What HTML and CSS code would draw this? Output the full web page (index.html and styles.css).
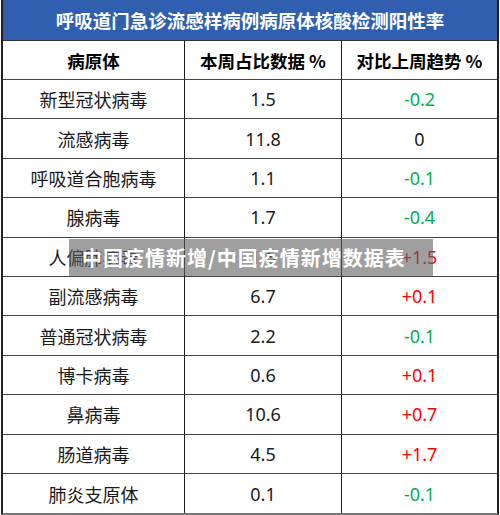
FILE: index.html
```html
<!DOCTYPE html>
<html lang="zh">
<head>
<meta charset="utf-8">
<link rel="stylesheet" href="styles.css">
</head>
<body>
<div class="sheet">
  <div class="title">呼吸道门急诊流感样病例病原体核酸检测阳性率</div>
  <div class="grid">
    <div class="cell head">病原体</div>
    <div class="cell head">本周占比数据 %</div>
    <div class="cell head">对比上周趋势 %</div>

    <div class="cell">新型冠状病毒</div><div class="cell">1.5</div><div class="cell down">-0.2</div>
    <div class="cell">流感病毒</div><div class="cell">11.8</div><div class="cell">0</div>
    <div class="cell">呼吸道合胞病毒</div><div class="cell">1.1</div><div class="cell down">-0.1</div>
    <div class="cell">腺病毒</div><div class="cell">1.7</div><div class="cell down">-0.4</div>
    <div class="cell">人偏肺病毒</div><div class="cell">1.6</div><div class="cell up">+1.5</div>
    <div class="cell">副流感病毒</div><div class="cell">6.7</div><div class="cell up">+0.1</div>
    <div class="cell">普通冠状病毒</div><div class="cell">2.2</div><div class="cell down">-0.1</div>
    <div class="cell">博卡病毒</div><div class="cell">0.6</div><div class="cell up">+0.1</div>
    <div class="cell">鼻病毒</div><div class="cell">10.6</div><div class="cell up">+0.7</div>
    <div class="cell">肠道病毒</div><div class="cell">4.5</div><div class="cell up">+1.7</div>
    <div class="cell">肺炎支原体</div><div class="cell">0.1</div><div class="cell down">-0.1</div>
  </div>
  <div class="watermark">中国疫情新增/中国疫情新增数据表</div>
</div>
</body>
</html>
```
FILE: styles.css
```css
html, body {
  margin: 0;
  padding: 0;
  background: #fff;
}
body {
  font-family: "Noto Sans", "Noto Sans CJK SC", sans-serif;
  width: 500px;
  height: 515px;
  overflow: hidden;
}
.sheet {
  position: relative;
  margin: 0 1px;
  width: 498px;
  box-sizing: border-box;
  border-left: 2px solid #222;
  border-right: 2px solid #222;
  border-bottom: 2px solid #777;
}
.title {
  height: 41px;
  background: #2f5fae;
  color: #fff;
  font-family: "Noto Sans CJK SC", sans-serif;
  font-weight: 700;
  font-size: 18.5px;
  display: flex;
  align-items: center;
  justify-content: center;
  border-bottom: 1px solid #333;
  box-sizing: border-box;
}
.grid {
  display: grid;
  grid-template-columns: 182px 157px 1fr;
  grid-template-rows: 39px;
  grid-auto-rows: 39.4px;
}
.cell {
  display: flex;
  align-items: center;
  justify-content: center;
  box-sizing: border-box;
  border-bottom: 1px solid #444;
  border-right: 1px solid #1a1a1a;
  font-size: 18px;
  color: #1a1a1a;
}
.cell:nth-child(3n) {
  border-right: none;
}
.cell:nth-last-child(-n+3) {
  border-bottom: none;
}
.head {
  font-family: "Noto Sans CJK SC", sans-serif;
  font-weight: 700;
  font-size: 17.5px;
  color: #000;
}
.down {
  color: #00b050;
}
.up {
  color: #ff0000;
}
.watermark {
  position: absolute;
  left: 66px;
  top: 239px;
  width: 364px;
  height: 37px;
  box-sizing: border-box;
  padding-left: 13px;
  background: rgba(95, 95, 95, 0.6);
  color: #fff;
  font-family: "Noto Sans CJK SC", sans-serif;
  font-weight: 700;
  font-size: 20px;
  letter-spacing: 1px;
  line-height: 37px;
  white-space: nowrap;
}
```
